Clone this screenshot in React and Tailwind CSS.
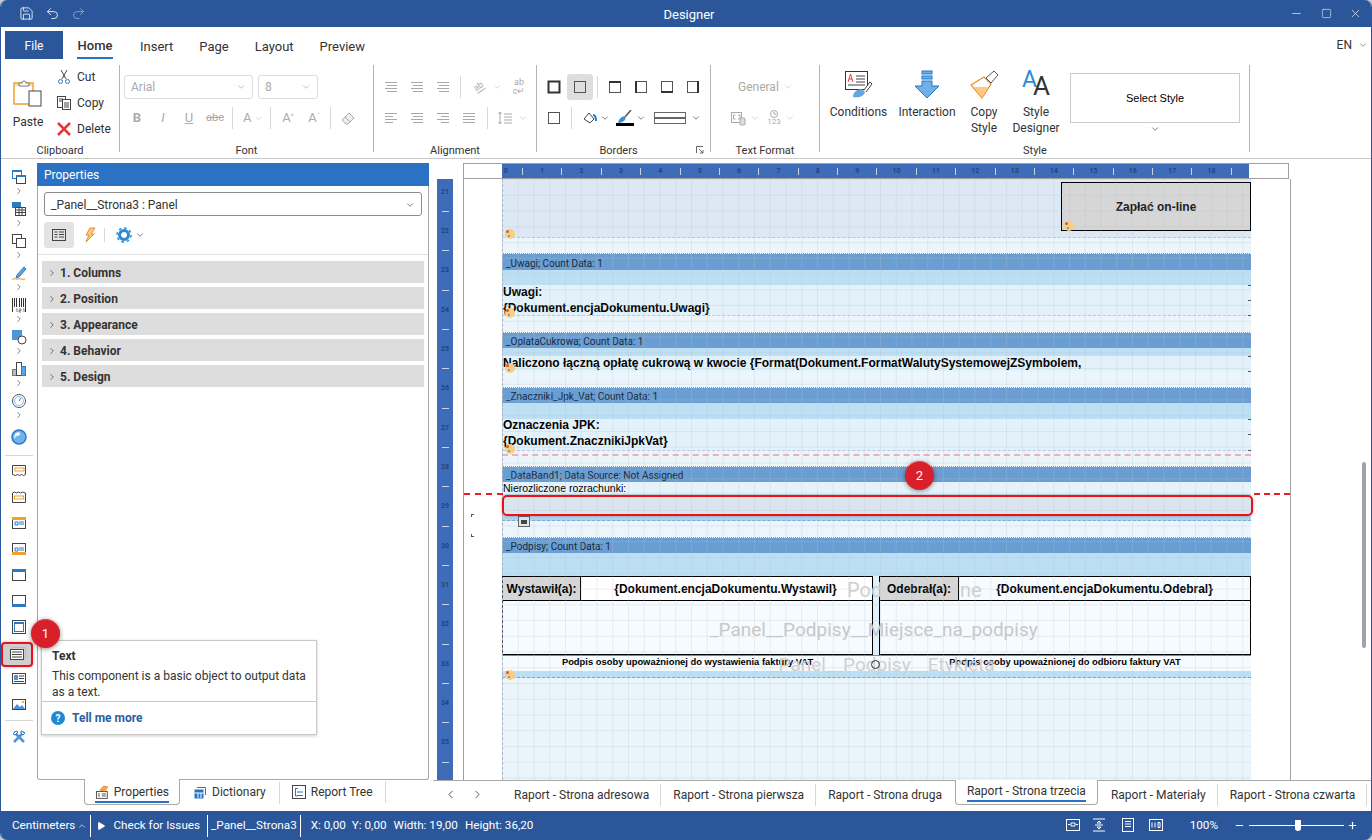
import React from 'react';
import { Undo2, Redo2, Save, Minus, Square, X, ChevronDown, ChevronRight, ChevronLeft, ChevronUp, Play, Plus } from 'lucide-react';

// shared bits
const Svg = ({ s = 16, h, children, className }) => (
  <svg width={s} height={h || s} viewBox={`0 0 ${s} ${h || s}`} fill="none" className={className}>{children}</svg>
);

const Chev = ({ className = 'text-[#555]', size = 10 }) => <ChevronDown size={size} strokeWidth={1.5} className={className} />;

const Cell = ({ active, children }) => (
  <div className={`w-[26px] h-[26px] shrink-0 flex items-center justify-center rounded-[3px] ${active ? 'bg-[#dedede]' : ''}`}>{children}</div>
);

const VSep = () => <div className="w-px h-[22px] bg-[#d8d8d8] shrink-0" />;

const Lines = ({ mode = 'center', dis = true }) => {
  const c = dis ? '#a8a8a8' : '#555';
  const rows = { center: [[1, 12], [3, 10], [1, 12], [3, 10]], left: [[1, 12], [1, 8], [1, 12], [1, 8]], right: [[1, 12], [5, 8], [1, 12], [5, 8]], full: [[1, 12], [1, 12], [1, 12], [1, 12]] }[mode];
  return (
    <Svg s={14}>
      {rows.map(([x, w], i) => <rect key={i} x={x} y={2 + i * 3} width={w} height="1" fill={c} />)}
    </Svg>
  );
};

const BoxIcon = ({ bold, side }) => (
  <Svg s={14}>
    <rect x="1.5" y="1.5" width="11" height="11" stroke={bold ? '#333' : '#555'} strokeWidth={bold ? 2 : 1} />
    {side === 't' && <rect x="1" y="1" width="12" height="2" fill="#333" />}
    {side === 'l' && <rect x="1" y="1" width="2" height="12" fill="#333" />}
    {side === 'b' && <rect x="1" y="11" width="12" height="2" fill="#333" />}
    {side === 'r' && <rect x="11" y="1" width="2" height="12" fill="#333" />}
  </Svg>
);

const GroupLabel = ({ children, extra, className = '' }) => (
  <div className={`absolute bottom-0 left-0 right-0 h-[15px] flex items-center justify-center text-[11px] leading-none text-[#333] ${className}`}>
    {children}
    {extra}
  </div>
);

const BigLabel = ({ children }) => <div className="text-[12px] leading-[16px] text-[#333] text-center">{children}</div>;

// ribbon
const ClipboardGroup = () => (
  <div className="relative w-[114px] h-[99px] pl-[8px] flex shrink-0">
    <div className="w-[30px] pt-[20px] flex flex-col items-center">
      <Svg s={30} h={30}>
        <rect x="1" y="4" width="19" height="21" fill="#fff" stroke="#f0a030" strokeWidth="1.5" />
        <rect x="2" y="5" width="17" height="2" fill="#fbd9a0" />
        <path d="M6 6 V4 h3 a2 2 0 0 1 4 0 h3 v3 H6z" fill="#fff" stroke="#777" />
        <rect x="16" y="12" width="12" height="15" fill="#fff" stroke="#444" />
      </Svg>
      <div className="mt-[7px] text-[12px] leading-none text-[#333]">Paste</div>
    </div>
    <div className="ml-[13px] pt-[5px] flex flex-col text-[12px] text-[#333]">
      {[
        ['Cut', <Svg key="c"><path d="M5 1l5 9M11 1L6 10" stroke="#444" /><circle cx="4.500" cy="12.500" r="2" stroke="#2b7bc4" /><circle cx="11.500" cy="12.500" r="2" stroke="#2b7bc4" /></Svg>],
        ['Copy', <Svg key="d"><rect x="1.5" y="1.5" width="8" height="11" stroke="#444" fill="#fff" /><rect x="6.5" y="4.5" width="8" height="10" stroke="#444" fill="#fff" /><path d="M8 8h5M8 10h5M8 12h5M3 4h4M3 6h3" stroke="#444" /></Svg>],
        ['Delete', <Svg key="x"><path d="M2 2l12 12M14 2L2 14" stroke="#e8383d" strokeWidth="2.6" /></Svg>],
      ].map(([t, icon]) => (
        <div key={t} className="h-[26px] flex items-center gap-[5px]">
          <div className="w-[16px] flex justify-center">{icon}</div>
          {t}
        </div>
      ))}
    </div>
    <GroupLabel><span className="mr-[4px]">Clipboard</span></GroupLabel>
  </div>
);

const FontGroup = () => (
  <div className="relative w-[253px] h-[99px] pl-[4px] pt-[16px] shrink-0 text-[#aaa]">
    <div className="flex gap-[5px]">
      <div className="w-[129px] h-[24px] border border-[#dcdcdc] rounded-[3px] flex items-center justify-between px-[6px] text-[12px]">Arial<Chev className="text-[#999]" /></div>
      <div className="w-[60px] h-[24px] border border-[#dcdcdc] rounded-[3px] flex items-center justify-between px-[6px] text-[12px]">8<Chev className="text-[#999]" /></div>
    </div>
    <div className="flex items-center mt-[6px] h-[26px]">
      <Cell><span className="text-[13px] font-bold">B</span></Cell>
      <Cell><span className="text-[13px] italic">I</span></Cell>
      <Cell><span className="text-[13px] underline">U</span></Cell>
      <Cell><span className="text-[11px] line-through">abc</span></Cell>
      <div className="ml-[4px]"><VSep /></div>
      <div className="w-[34px] pl-[10px] flex items-center gap-[3px] shrink-0 text-[13px]">A<Chev className="text-[#bbb]" size={9} /></div>
      <div className="ml-[3px]"><VSep /></div>
      <div className="ml-[4px]"><Cell><span className="text-[13px]">A<sup className="text-[7px]">^</sup></span></Cell></div>
      <Cell><span className="text-[13px]">A<sup className="text-[7px]">ˇ</sup></span></Cell>
      <div className="ml-[3px]"><VSep /></div>
      <div className="ml-[4px]"><Cell><Svg><path d="M2 10l7-7 5 5-6 6H6z" stroke="#aaa" fill="#eee" /><path d="M5 7l5 5" stroke="#aaa" /></Svg></Cell></div>
    </div>
    <GroupLabel>Font</GroupLabel>
  </div>
);

const AlignGroup = () => (
  <div className="relative w-[162px] h-[99px] pl-[4px] pt-[15px] shrink-0">
    <div className="flex items-center h-[26px]">
      <Cell><Lines /></Cell><Cell><Lines /></Cell><Cell><Lines /></Cell>
      <div className="ml-[4px] mr-[5px]"><VSep /></div>
      <Cell><span className="text-[9px] text-[#aaa] -rotate-[35deg] border-b border-[#aaa] leading-none">ab</span></Cell>
      <div className="w-[10px]"><Chev className="text-[#bbb]" /></div>
      <div className="ml-[4px]"><Cell><span className="text-[9px] leading-[9px] text-[#aaa] text-center">ab<br />c↵</span></Cell></div>
    </div>
    <div className="flex items-center h-[26px] mt-[5px]">
      <Cell><Lines mode="left" /></Cell><Cell><Lines /></Cell><Cell><Lines mode="right" /></Cell><Cell><Lines mode="full" /></Cell>
      <div className="ml-[5px] mr-[4px]"><VSep /></div>
      <Cell><Svg><path d="M3 2v12M1.5 4L3 2l1.500 2M1.500 12L3 14l1.500-2M7 4h8M7 7h8M7 10h8M7 13h8" stroke="#aaa" /></Svg></Cell>
      <div className="w-[10px]"><Chev className="text-[#bbb]" /></div>
    </div>
    <GroupLabel>Alignment</GroupLabel>
  </div>
);

const BordersGroup = () => (
  <div className="relative w-[173px] h-[99px] pl-[4px] pt-[15px] shrink-0">
    <div className="flex items-center h-[26px]">
      <Cell><BoxIcon bold /></Cell>
      <Cell active><BoxIcon /></Cell>
      <div className="ml-[4px] mr-[4px]"><VSep /></div>
      <Cell><BoxIcon side="t" /></Cell><Cell><BoxIcon side="l" /></Cell><Cell><BoxIcon side="b" /></Cell><Cell><BoxIcon side="r" /></Cell>
    </div>
    <div className="flex items-center h-[26px] mt-[5px]">
      <Cell><BoxIcon /></Cell>
      <div className="ml-[4px] mr-[8px]"><VSep /></div>
      <div className="w-[20px] flex justify-center">
        <Svg><path d="M2 9l5-6 5 6-4 4z" stroke="#444" fill="#fff" /><path d="M11 5c2 0 3 2 3 6" stroke="#1f78c8" strokeWidth="2" /></Svg>
      </div>
      <div className="w-[10px] mr-[5px]"><Chev className="text-[#333]" /></div>
      <div className="w-[20px] flex flex-col items-center">
        <Svg s={18} h={13}><path d="M15 0L9 7" stroke="#555" strokeWidth="1.500" /><path d="M2 13c1-4 3-7 8-7l-1 4c-2 2-4 3-7 3z" fill="#3f8fd6" /></Svg>
        <div className="w-[18px] h-[3px] bg-black" />
      </div>
      <div className="w-[10px] ml-[1px] mr-[8px]"><Chev className="text-[#333]" /></div>
      <div className="w-[32px] h-[12px] border border-[#666] flex flex-col justify-center shrink-0"><div className="h-[2px] bg-[#666]" /></div>
      <div className="w-[10px] ml-[5px]"><Chev className="text-[#333]" /></div>
    </div>
    <GroupLabel className="pr-[10px]" extra={
      <div className="absolute right-[6px] top-[3px]">
        <Svg s={8}><path d="M0.500 7V0.500H7M3 3l4 4M7 4v3H4" stroke="#666" /></Svg>
      </div>
    }>Borders</GroupLabel>
  </div>
);

const TextFormatGroup = () => (
  <div className="relative w-[108px] h-[99px] pt-[15px] shrink-0 text-[#aaa]">
    <div className="h-[26px] flex items-center gap-[4px] pl-[27px] text-[12px]">General<Chev className="text-[#bbb]" /></div>
    <div className="h-[26px] mt-[5px] flex items-center pl-[19px]">
      <Svg><rect x="1.500" y="2.500" width="10" height="10" stroke="#aaa" /><path d="M3.500 5h2M3.500 9h2M3.500 5v4M8 5h2v4H8" stroke="#aaa" /><rect x="10" y="8" width="5" height="7" rx="1" fill="#ddd" stroke="#aaa" /></Svg>
      <div className="ml-[4px]"><Chev className="text-[#bbb]" /></div>
      <div className="w-[16px] ml-[6px] mr-[3px] flex flex-col items-center text-[8px] leading-[8px]">
        <Svg s={8}><circle cx="4" cy="4" r="3.500" stroke="#aaa" /><path d="M4 2v2h2" stroke="#aaa" /></Svg>
        123
      </div>
      <Chev className="text-[#bbb]" />
    </div>
    <GroupLabel>Text Format</GroupLabel>
  </div>
);

const StyleGroup = () => (
  <div className="relative w-[429px] h-[99px] shrink-0 flex pl-[10px] pt-[11px]">
    <div className="w-[57px] flex flex-col items-center">
      <Svg s={30} h={30}>
        <rect x="1.500" y="1.500" width="22" height="18" fill="#fff" stroke="#333" />
        <path d="M4 12l2.500-8 2.500 8M5 9h3" stroke="#e8383d" />
        <path d="M12 6h9M12 9h9M12 12h9M4 15h17" stroke="#444" />
        <path d="M9 27c0-5 4-8 9-8l3 3c-1 4-5 6-12 5z" fill="#62a8e0" />
        <path d="M20 20l6-8 2 2-6 8" fill="#fff" stroke="#444" />
      </Svg>
      <div className="mt-[4px]"><BigLabel>Conditions</BigLabel></div>
    </div>
    <div className="w-[56px] ml-[12px] flex flex-col items-center">
      <Svg s={30} h={30}>
        <rect x="10" y="1" width="10" height="3" fill="#6fb0e8" stroke="#1f78c8" />
        <rect x="10" y="6" width="10" height="3" fill="#6fb0e8" stroke="#1f78c8" />
        <path d="M10 11h10v5h7L15 28 3 16h7z" fill="#6fb0e8" stroke="#1f78c8" />
      </Svg>
      <div className="mt-[4px]"><BigLabel>Interaction</BigLabel></div>
    </div>
    <div className="w-[40px] ml-[9px] flex flex-col items-center">
      <Svg s={30} h={30}>
        <path d="M2 15l13-8 7 7-9 14z" fill="#fff" stroke="#ee8c1f" strokeWidth="1.200" />
        <path d="M5 17h14l-6 11z" fill="#fbc97f" />
        <path d="M17 8l8-7 4 4-7 8z" fill="#fff" stroke="#555" />
      </Svg>
      <div className="mt-[4px]"><BigLabel>Copy<br />Style</BigLabel></div>
    </div>
    <div className="w-[54px] ml-[5px] flex flex-col items-center">
      <div className="relative h-[30px] w-[30px]">
        <span className="absolute left-[1px] -top-[3px] text-[23px] leading-[26px] text-[#2a8ad4]">A</span>
        <span className="absolute left-[12px] top-[1px] text-[26px] leading-[30px] text-[#333]">A</span>
      </div>
      <div className="mt-[4px]"><BigLabel>Style<br />Designer</BigLabel></div>
    </div>
    <div className="ml-[7px] -mt-[2px] flex flex-col items-center">
      <div className="w-[170px] h-[50px] mt-[5px] border border-[#ccc] flex items-center justify-center text-[11px] text-black [font-family:'Liberation_Sans',sans-serif]">Select Style</div>
      <div className="mt-[1px]"><Chev className="text-[#333]" /></div>
    </div>
    <div className="absolute bottom-0 left-[203px] h-[15px] flex items-center text-[11px] leading-none text-[#333]">Style</div>
  </div>
);

const GroupSep = () => <div className="w-px h-[87px] mt-[6px] bg-[#b4b4b4] shrink-0" />;

// left icon rail
const RailPair = ({ children }) => (
  <div className="h-[32px] flex flex-col items-center">
    {children}
    <ChevronRight size={10} strokeWidth={1.6} className="text-[#444] mt-[1px]" />
  </div>
);

const Band = ({ a = '#f59e2c', pos }) => (
  <Svg>
    <rect x="1.500" y="2.500" width="13" height="11" fill="#fff" stroke="#444" />
    {pos === 't' && <rect x="1" y="2" width="14" height="3" fill={a} />}
    {pos === 'b' && <rect x="1" y="11" width="14" height="3" fill={a} />}
    {pos === 'm' && <rect x="4" y="6" width="8" height="3" fill="#fff" stroke={a} />}
    {(pos === 't' || pos === 'b') && a === '#f59e2c' && <path d="M4 7h3v3H4zM8 7h5M8 9h5" stroke="#2b7bc4" />}
  </Svg>
);

const Rail = () => (
  <div className="w-[36px] shrink-0 flex flex-col items-center pt-[10px]">
    <RailPair><Svg><rect x="1.500" y="1.500" width="9" height="8" fill="#fff" stroke="#2b7bc4" /><rect x="1" y="1" width="10" height="2" fill="#2b7bc4" /><rect x="5.500" y="6.500" width="9" height="8" fill="#fff" stroke="#444" /><rect x="5" y="6" width="10" height="2" fill="#2b7bc4" /></Svg></RailPair>
    <RailPair><Svg><rect x="1" y="1" width="9" height="6" fill="#2b7bc4" /><rect x="4.500" y="6.500" width="10" height="8" fill="#fff" stroke="#444" /><path d="M4 9h11M4 11.500h11M8 6v9M11 6v9" stroke="#444" /></Svg></RailPair>
    <RailPair><Svg><rect x="1.500" y="1.500" width="9" height="9" stroke="#444" /><rect x="5.500" y="5.500" width="9" height="9" fill="#fff" stroke="#444" /></Svg></RailPair>
    <RailPair><Svg><path d="M6 10l7-8 2 2-7 8-3 1z" fill="#5aa5e2" stroke="#2b7bc4" /><path d="M1 15c2-3 4 0 6-1s4 1 7 0" stroke="#ef8a17" /></Svg></RailPair>
    <RailPair><Svg><path d="M1.500 1v14M14.500 1v14M3.500 1v9M5.500 1v9M8.500 1v9M10.500 1v9M12.500 1v9" stroke="#333" /><path d="M5 12h1v3M8 12h2v1.500H8V15h2M12 12h1v3" stroke="#666" strokeWidth=".8" /></Svg></RailPair>
    <RailPair><Svg><rect x="1" y="1" width="10" height="10" fill="#4d94dc" /><circle cx="11" cy="11" r="4" fill="#fff" stroke="#444" /></Svg></RailPair>
    <RailPair><Svg><rect x="1.500" y="8.500" width="4" height="6" fill="#bbb" stroke="#777" /><rect x="5.500" y="1.500" width="5" height="13" fill="#fff" stroke="#444" /><rect x="10.500" y="5.500" width="4" height="9" fill="#5aa5e2" stroke="#2b7bc4" /></Svg></RailPair>
    <RailPair><Svg><circle cx="8" cy="8" r="6.500" stroke="#555" /><circle cx="8" cy="8" r="4.500" stroke="#8cc0ea" /><path d="M8 8l2-3" stroke="#2b7bc4" /></Svg></RailPair>
    <div className="h-[24px] flex items-center">
      <Svg><circle cx="8" cy="8" r="7" fill="#6fb3ea" stroke="#2b7bc4" strokeWidth="1.500" /><path d="M4 5c2-2 4-2 5-1s-1 3-3 3-1 3-3 2" fill="#f4f9fd" /></Svg>
    </div>
    <div className="w-[28px] h-px bg-[#d8d8d8] mt-[6px] mb-[2px]" />
    <div className="flex flex-col items-center">
      {[
        <Svg key="1"><path d="M1.500 2.500h13v9l-2 1-2-1-2 1-2-1-2 1-3-1z" fill="#fff" stroke="#444" /><rect x="4" y="5" width="9" height="3" fill="#fff" stroke="#f59e2c" /></Svg>,
        <Svg key="2"><path d="M1.500 4l2-1 2 1 2-1 2 1 2-1 3 1v9.500h-13z" fill="#fff" stroke="#444" /><rect x="3.500" y="7" width="9" height="3" fill="#fff" stroke="#f59e2c" /></Svg>,
        <Band key="3" pos="t" />, <Band key="4" pos="b" />,
        <Band key="5" pos="t" a="#2b7bc4" />, <Band key="6" pos="b" a="#2b7bc4" />,
      ].map((ic, i) => <div key={i} className="h-[26px] flex items-center">{ic}</div>)}
      <div className="h-[26px] flex items-center">
        <Svg><rect x="1.500" y="1.500" width="13" height="13" stroke="#444" /><rect x="3.500" y="3.500" width="9" height="9" fill="#fff" stroke="#2b7bc4" /><rect x="3" y="3" width="10" height="2" fill="#2b7bc4" /></Svg>
      </div>
      <div className="h-[26px] flex items-center"><Svg><rect x="1.500" y="2.500" width="13" height="10" fill="#fff" stroke="#444" /><path d="M3 5h10M3 7.500h10M3 10h10" stroke="#444" /></Svg></div>
      <div className="h-[26px] flex items-center"><Svg><rect x="1.500" y="2.500" width="13" height="10" fill="#fff" stroke="#444" /><rect x="3" y="4" width="4" height="5" fill="#4d94dc" /><path d="M8 5h5M8 7.500h5M3 10.500h10" stroke="#444" /></Svg></div>
      <div className="h-[26px] flex items-center"><Svg><rect x="1.500" y="2.500" width="13" height="10" fill="#fff" stroke="#444" /><path d="M2 12l4-5 3 3 2-2 3 4z" fill="#4d94dc" /><circle cx="12" cy="5" r="1" fill="#ef8a17" /></Svg></div>
    </div>
    <div className="w-[28px] h-px bg-[#d8d8d8] mt-[2px] mb-[8px]" />
    <Svg><path d="M3 3l10 10M13 3L3 13" stroke="#4d94dc" strokeWidth="2.500" /><path d="M2 5l3-3 2 1-3 3zM10 2l4 2-2 2-2-2z" fill="#fff" stroke="#2b7bc4" /></Svg>
  </div>
);

// properties panel
const PropertiesPanel = () => (
  <div className="w-[392px] shrink-0 flex flex-col pt-[4px]">
    <div className="h-[23px] bg-[#2b72c4] text-white text-[12px] flex items-center pl-[7px] pt-px">Properties</div>
    <div className="flex-1 border-x border-b border-[#a8a8a8] rounded-b-[3px] px-[6px] pt-[6px]">
      <div className="h-[24px] border border-[#8c8c8c] rounded-[3px] flex items-center justify-between px-[6px] pt-px text-[12px] text-[#333]">
        _Panel__Strona3 : Panel
        <Chev className="text-[#333]" />
      </div>
      <div className="flex items-center h-[26px] mt-[6px]">
        <div className="w-[30px] h-[26px] bg-[#e3e3e3] rounded-[3px] flex items-center justify-center">
          <Svg s={14}><rect x="0.500" y="1.500" width="13" height="11" stroke="#444" /><path d="M2.500 4h3M2.500 6.500h3M2.500 9h3M7 4h5M7 6.500h5M7 9h5" stroke="#444" /></Svg>
        </div>
        <div className="w-[30px] flex justify-center">
          <Svg><path d="M9 1h5L10 7h3l-8 8 3-7H5z" fill="#fbc97f" stroke="#ee8c1f" /></Svg>
        </div>
        <div className="w-px h-[14px] bg-[#d8d8d8] mr-[11px]" />
        <Svg><circle cx="8" cy="8" r="4.500" stroke="#2b8ad4" strokeWidth="3" /><circle cx="8" cy="8" r="7" stroke="#2b8ad4" strokeWidth="1.500" strokeDasharray="2.500 3" /></Svg>
        <div className="ml-[3px]"><Chev className="text-[#333]" /></div>
      </div>
      <div className="-mx-[6px] mt-[6px] h-px bg-[#e2e2e2]" />
      <div className="mt-[6px] -mx-[2px] flex flex-col gap-[4px]">
        {['1. Columns', '2. Position', '3. Appearance', '4. Behavior', '5. Design'].map(t => (
          <div key={t} className="h-[22px] bg-[#dddddd] flex items-center pl-[5px] pt-px text-[12px] font-bold text-[#333]">
            <ChevronRight size={10} strokeWidth={1.6} className="text-[#333] mr-[3px]" />
            {t}
          </div>
        ))}
      </div>
    </div>
    <div className="h-[31px] flex items-start pl-[47px] text-[12px] text-[#333]">
      <div className="w-[96px] h-[26px] -mt-px bg-white border-x border-b border-[#a8a8a8] rounded-b-[4px] flex flex-col items-center pt-[4px]">
        <div className="flex items-center gap-[5px] h-[17px] w-[74px]">
          <Svg s={14}><rect x="1.500" y="6.500" width="11" height="7" fill="#fff" stroke="#555" /><path d="M3 9h2M3 11h2M7 9h4M7 11h4" stroke="#555" /><path d="M5 5l4-4 4 1-3 4z" fill="#f5a856" stroke="#ee8c1f" /></Svg>
          Properties
        </div>
        <div className="w-[74px] h-[2px] bg-[#2b72c4] mt-px" />
      </div>
      <div className="flex items-center h-[22px] mt-[1px]">
        <div className="ml-[13px]"><Svg s={14}><rect x="1.500" y="4.500" width="9" height="9" fill="#2b72c4" /><path d="M1.500 8h9M5 8v5M8 8v5" stroke="#fff" /><path d="M4 2.500h8.500V10" stroke="#2b72c4" /></Svg></div>
        <div className="ml-[5px]">Dictionary</div>
        <div className="ml-[13px] h-[20px]"><VSep /></div>
        <div className="ml-[12px]"><Svg s={14}><rect x="0.500" y="0.500" width="13" height="13" stroke="#444" /><path d="M3 3.500h3M5 7h6M5 10.500h6M3.500 3v8h2" stroke="#2b72c4" /></Svg></div>
        <div className="ml-[5px]">Report Tree</div>
        <div className="ml-[12px]"><VSep /></div>
      </div>
    </div>
  </div>
);

// rulers
const hCells = Array.from({ length: 38 }, (_, i) => (i % 2 === 0 ? String(i / 2) : '|'));
const vCells = Array.from({ length: 30 }, (_, i) => (i % 2 === 0 ? String(21 + i / 2) : '—'));

const HRuler = () => (
  <div className="w-[826px] h-[16px] border border-[#a0a0a0] bg-white ml-0 pl-[38px] shrink-0">
    <div className="w-[747px] h-full bg-[#3f6cb9] overflow-hidden">
      <div className="flex -ml-[9px] w-[760px] text-[7px] text-[#24437a] font-bold">
        {hCells.map((c, i) => (
          <div key={i} className={`w-[19.7px] shrink-0 h-[14px] flex items-center ${i === 0 ? 'justify-end pr-[5px]' : 'justify-center'}`}>
            {c === '|' ? <div className="w-px h-[7px] bg-[#c8d4e8]" /> : c}
          </div>
        ))}
      </div>
    </div>
  </div>
);

const VRuler = () => (
  <div className="w-[16px] h-[601px] mt-[20px] bg-[#3f6cb9] overflow-hidden shrink-0 pt-[3px] text-[7px] text-[#24437a] font-bold">
    {vCells.map((c, i) => <div key={i} className="h-[19.68px] flex items-center justify-center">{c === '—' ? <div className="w-[7px] h-px bg-[#c8d4e8]" /> : c}</div>)}
  </div>
);

// report page
const arial = "[font-family:'Liberation_Sans',sans-serif]";

const Head = ({ h = 'h-[16px]', children }) => (
  <div className={`${h} bg-[#6a9ed2] border-t border-dotted border-white flex items-center pl-[4px] pt-[2px] text-[10px] text-[#18293d] [font-family:Roboto,sans-serif] whitespace-nowrap`}>{children}</div>
);

const Pal = ({ className }) => (
  <div className={`absolute w-[10px] h-[10px] rounded-full bg-[#f6cf85] ${className}`}>
    <div className="absolute left-[1px] top-[1px] w-[3px] h-[3px] rounded-full bg-[#e8532a]" />
    <div className="absolute left-[3px] top-[6px] w-[2px] h-[2px] rounded-full bg-[#5b8fb0]" />
  </div>
);

const Marks = ({ className }) => (
  <div className={`absolute w-[3px] border-t border-[#555] ${className}`} />
);

const ReportPage = () => (
  <div className="relative w-[749px] h-[601px] ml-[38px] overflow-hidden shrink-0">
    <div className={`flex flex-col h-full text-black ${arial}`}>
      <div className="h-[59px] bg-[#dce9f4] border-b border-dashed border-[#b5c8e2] flex justify-end pt-[3px] shrink-0">
        <div className="w-[190px] h-[49px] bg-[#d6d6d6] border border-black flex items-center justify-center text-[12px] font-bold text-[#1c1c1c]">Zapłać on-line</div>
      </div>
      <div className="h-[15px] bg-[#ebf5fb] shrink-0" />
      <Head h="h-[17px]">_Uwagi; Count Data: 1</Head>
      <div className="h-[15px] bg-[#bcdff3] shrink-0" />
      <div className="h-[31px] bg-[#e3f2fa] border-b border-dashed border-[#b5c8e2] text-[12px] font-bold leading-[16px] shrink-0">
        <div className="-mt-px pl-[1px]">Uwagi:<br />{'{Dokument.encjaDokumentu.Uwagi}'}</div>
      </div>
      <div className="h-[16px] bg-[#ebf5fb] shrink-0" />
      <Head>_OplataCukrowa; Count Data: 1</Head>
      <div className="h-[8px] bg-[#bcdff3] shrink-0" />
      <div className="h-[15px] bg-[#e3f2fa] pl-[1px] text-[12px] font-bold leading-[15px] whitespace-nowrap shrink-0">{'Naliczono łączną opłatę cukrową w kwocie {Format(Dokument.FormatWalutySystemowejZSymbolem,'}</div>
      <div className="h-[16px] bg-[#ebf5fb] shrink-0" />
      <Head>_Znaczniki_Jpk_Vat; Count Data: 1</Head>
      <div className="h-[16px] bg-[#bcdff3] shrink-0" />
      <div className="h-[32px] bg-[#e3f2fa] border-b border-dashed border-[#b5c8e2] text-[12px] font-bold leading-[16px] shrink-0">
        <div className="-mt-[2px] pl-[1px]">Oznaczenia JPK:<br />{'{Dokument.ZnacznikiJpkVat}'}</div>
      </div>
      <div className="h-[15px] bg-[#ebf5fb] shrink-0 pt-[3px]"><div className="border-t-2 border-dashed border-[#eeb0b8]" /></div>
      <Head>_DataBand1; Data Source: Not Assigned</Head>
      <div className="h-[13px] bg-[#e6f3fa] pl-[1px] text-[10.5px] leading-[12px] shrink-0">Nierozliczone rozrachunki:</div>
      <div className="h-[20px] bg-[#dae5ed] shrink-0" />
      <div className="h-[6px] bg-[#b2d3e8] border-b border-dashed border-[#7ea8d8] shrink-0" />
      <div className="h-[16px] bg-[#ebf5fb] shrink-0" />
      <Head>_Podpisy; Count Data: 1</Head>
      <div className="h-[23px] bg-[#bcdff3] shrink-0" />
      <div className="flex h-[79px] shrink-0 bg-[#e3f2fa]">
        <div className="w-[371px] border border-black bg-[#f6fbff] flex flex-col">
          <div className="h-[24px] flex border-b border-black text-[12px] font-bold">
            <div className="w-[78px] bg-[#d6d6d6] border-r border-black flex items-center justify-center">Wystawił(a):</div>
            <div className="flex-1 flex items-center justify-center bg-white pr-[2px]">{'{Dokument.encjaDokumentu.Wystawil}'}</div>
          </div>
        </div>
        <div className="w-[372px] ml-[6px] border border-black bg-[#f6fbff] flex flex-col">
          <div className="h-[24px] flex border-b border-black text-[12px] font-bold">
            <div className="w-[79px] bg-[#d6d6d6] border-r border-black flex items-center justify-center">Odebrał(a):</div>
            <div className="flex-1 flex items-center justify-center bg-[#f6fbff]">{'{Dokument.encjaDokumentu.Odebral}'}</div>
          </div>
        </div>
      </div>
      <div className="flex h-[16px] shrink-0 bg-[#f6fbff] border-t border-[#888] text-[9.4px] font-bold leading-[11px] whitespace-nowrap">
        <div className="w-[371px] text-center">Podpis osoby upoważnionej do wystawienia faktury VAT</div>
        <div className="w-[378px] pl-[6px] text-center">Podpis osoby upoważnionej do odbioru faktury VAT</div>
      </div>
      <div className="h-[7px] bg-[#bcdff3] border-b border-dashed border-[#6fa5dc] shrink-0" />
      <div className="flex-1 bg-[#e9f4fb]" />
    </div>

    {/* grid sits over the bands */}
    <div className="absolute inset-0 pointer-events-none bg-[linear-gradient(to_right,rgba(180,192,205,.26)_1px,transparent_1px),linear-gradient(to_bottom,rgba(180,192,205,.26)_1px,transparent_1px)] bg-[size:15.75px_15.75px]" />
    <div className="absolute left-0 top-0 bottom-0 border-l border-dashed border-[#a8b4c4]" />

    {/* object names drawn across the page */}
    <div className="absolute left-[345px] top-[399px] text-[20px] leading-[24px] text-[#cfcfcf] whitespace-nowrap pointer-events-none">Pod</div>
    <div className="absolute left-[458px] top-[399px] text-[20px] leading-[24px] text-[#cfcfcf] whitespace-nowrap pointer-events-none">ne</div>
    <div className="absolute left-[208px] top-[439px] text-[19px] leading-[24px] text-[#c8c8c8] whitespace-nowrap pointer-events-none">_Panel__Podpisy__Miejsce_na_podpisy</div>
    <div className="absolute left-[268px] top-[474px] text-[19px] leading-[24px] text-[#cfcfcf] whitespace-nowrap pointer-events-none">_Panel__Podpisy__Etykieta</div>

    <Pal className="left-[3px] top-[50px]" />
    <Pal className="left-[562px] top-[42px]" />
    <Pal className="left-[3px] top-[129px]" />
    <Pal className="left-[3px] top-[184px]" />
    <Pal className="left-[3px] top-[265px]" />
    <Pal className="left-[3px] top-[491px]" />
    <Marks className="right-0 top-[106px]" />
    <Marks className="right-0 top-[121px]" />
    <Marks className="right-0 top-[136px]" />
    <Marks className="right-0 top-[177px]" />
    <Marks className="right-0 top-[192px]" />
    <Marks className="right-0 top-[240px]" />
    <Marks className="right-0 top-[255px]" />
    <Marks className="right-0 top-[271px]" />
    <div className="absolute left-[369px] top-[481px] w-[9px] h-[9px] rounded-full border border-[#333]" />
    <div className="absolute left-[16px] top-[337px] w-[12px] h-[11px] border border-[#666] bg-[#dfe7ee] flex items-center justify-center"><div className="w-[6px] h-[4px] bg-[#444]" /></div>
  </div>
);

const ReportTabs = () => (
  <div className="h-[31px] ml-[4px] border-t border-[#a8a8a8] flex items-center pb-[3px] text-[12px] text-[#333] shrink-0">
    <ChevronLeft size={13} strokeWidth={1.5} className="ml-[11px] text-[#333]" />
    <ChevronRight size={13} strokeWidth={1.5} className="ml-[14px] text-[#333]" />
    <span className="ml-[30px]">Raport - Strona adresowa</span>
    <div className="ml-[11px]"><VSep /></div>
    <span className="ml-[12px]">Raport - Strona pierwsza</span>
    <div className="ml-[11px]"><VSep /></div>
    <span className="ml-[12px]">Raport - Strona druga</span>
    <div className="w-[143px] h-[25px] ml-[13px] self-start -mt-px bg-white border-x border-b border-[#a8a8a8] rounded-b-[4px] flex flex-col items-center pt-[3px]">
      <span className="leading-[17px]">Raport - Strona trzecia</span>
      <div className="w-[119px] h-[2px] bg-[#2b72c4]" />
    </div>
    <span className="ml-[13px]">Raport - Materiały</span>
    <div className="ml-[11px]"><VSep /></div>
    <span className="ml-[12px] whitespace-nowrap">Raport - Strona czwarta</span>
    <div className="ml-[11px]"><VSep /></div>
  </div>
);

const StatusBar = () => (
  <div className="h-[29px] bg-[#2b579a] text-white text-[11.7px] flex items-center shrink-0 pl-[11px] whitespace-nowrap">
    <span>Centimeters</span>
    <ChevronUp size={10} strokeWidth={1.6} className="ml-[2px]" />
    <div className="w-px h-[22px] bg-white ml-[3px]" />
    <Play size={10} fill="#fff" strokeWidth={0} className="ml-[5px]" />
    <span className="ml-[7px]">Check for Issues</span>
    <div className="w-px h-[22px] bg-white ml-[7px]" />
    <span className="ml-[3px]">_Panel__Strona3</span>
    <div className="w-px h-[22px] bg-white ml-[3px]" />
    <span className="ml-[10px]">X: 0,00</span>
    <span className="ml-[6px]">Y: 0,00</span>
    <span className="ml-[7px]">Width: 19,00</span>
    <span className="ml-[7px]">Height: 36,20</span>
    <div className="ml-auto flex items-center">
      <Svg s={14}><rect x="0.500" y="1.500" width="13" height="11" stroke="#fff" /><path d="M5 5h4v3H5zM2 6.500h2M10 6.500h2" stroke="#fff" /></Svg>
      <div className="ml-[12px]"><Svg s={14}><path d="M1 1h12M1 13h12M3 7h8M7 3l2 2H5zM7 11l2-2H5z" stroke="#fff" /></Svg></div>
      <div className="ml-[15px]"><Svg s={14}><rect x="1.500" y="0.500" width="11" height="13" stroke="#fff" /><path d="M4 3.500h6M4 6h6M4 8.500h6" stroke="#fff" /></Svg></div>
      <div className="ml-[14px]"><Svg s={14}><rect x="0.500" y="1.500" width="13" height="11" stroke="#fff" /><path d="M3 4.500v5M6 4.500v5M9 4.500h2v5H9z" stroke="#fff" /></Svg></div>
      <span className="ml-[27px]">100%</span>
      <Minus size={11} strokeWidth={2.6} className="ml-[16px]" />
      <div className="relative w-[95px] h-px bg-white ml-[4px]">
        <div className="absolute left-[46px] -top-[5px] w-[6px] h-[11px] bg-white rounded-b-[3px]" />
      </div>
      <Plus size={11} strokeWidth={2.6} className="ml-[3px] mr-[13px]" />
    </div>
  </div>
);

const Badge = ({ n, className }) => (
  <div className={`absolute w-[29px] h-[29px] rounded-full bg-[#d8202a] border-t border-[#f04048] shadow-[0_1px_5px_rgba(0,0,0,0.45)] text-white text-[13px] flex items-center justify-center ${className}`}>{n}</div>
);

export default function App() {
  return (
    <div className="w-[1372px] h-[840px] bg-[#c4c8d0]">
      <div className="relative w-full h-full rounded-[7px] overflow-hidden bg-white border-x border-[#2b579a] flex flex-col [font-family:Roboto,sans-serif]">
        <div className="h-[27px] bg-[#2b579a] text-white flex items-center shrink-0 pl-[18px] pr-[9px]">
          <Save size={15} strokeWidth={1.3} />
          <Undo2 size={15} strokeWidth={1.3} className="ml-[11px]" />
          <Redo2 size={15} strokeWidth={1.3} className="ml-[11px] opacity-50" />
          <div className="flex-1 text-center text-[13px] pt-[3px] pl-[2px]">Designer</div>
          <Minus size={13} strokeWidth={1.2} />
          <Square size={11} strokeWidth={1.2} className="ml-[18px]" />
          <X size={13} strokeWidth={1.2} className="ml-[17px]" />
        </div>

        <div className="h-[32px] flex items-end pl-[4px] text-[13px] text-[#333] shrink-0">
          <div className="w-[58px] h-[28px] bg-[#2b579a] text-white text-[12px] flex items-center justify-center pt-[2px]">File</div>
          <div className="ml-[14px] w-[36px] h-[28px] pt-[3px] border-b-2 border-[#2b72c4] flex items-center justify-center font-medium">Home</div>
          <div className="ml-[27px] h-[28px] pt-[3px] flex items-center">Insert</div>
          <div className="ml-[26px] h-[28px] pt-[3px] flex items-center">Page</div>
          <div className="ml-[26px] h-[28px] pt-[3px] flex items-center">Layout</div>
          <div className="ml-[26px] h-[28px] pt-[3px] flex items-center">Preview</div>
          <div className="ml-auto h-[28px] flex items-center gap-[6px] pr-[3px] text-[12px]">EN<Chev className="text-[#555]" /></div>
        </div>

        <div className="h-[100px] flex items-start pl-[4px] border-b border-[#c8c8c8] shrink-0">
          <ClipboardGroup />
          <GroupSep />
          <FontGroup />
          <GroupSep />
          <AlignGroup />
          <GroupSep />
          <BordersGroup />
          <GroupSep />
          <TextFormatGroup />
          <GroupSep />
          <StyleGroup />
          <GroupSep />
        </div>

        <div className="flex-1 flex min-h-0">
          <Rail />
          <PropertiesPanel />
          <div className="flex-1 flex flex-col min-w-0">
            <div className="flex-1 flex pl-[8px] min-h-0">
              <VRuler />
              <div className="ml-[10px] flex flex-col pt-[4px] w-[828px] shrink-0">
                <HRuler />
                <div className="h-[601px] w-[828px] border-x border-[#a0a0a0] shrink-0">
                  <ReportPage />
                </div>
              </div>
              <div className="flex-1 relative">
                <div className="absolute left-[71px] top-[303px] w-[4px] h-[186px] bg-[#a0a4a8] rounded-full" />
              </div>
            </div>
            <ReportTabs />
          </div>
        </div>

        <StatusBar />

        {/* callouts from the tutorial, laid over the app */}
        <div className="absolute left-[0px] top-[642px] w-[32px] h-[25px] rounded-[4px] border-2 border-[#e8121c] bg-[#c9c9c9]/90 shadow-[0_0_3px_rgba(0,0,0,0.3)] flex items-center justify-center">
          <Svg><rect x="1.500" y="2.500" width="13" height="10" fill="#fff" stroke="#444" /><path d="M3 5h10M3 7.500h10M3 10h10" stroke="#444" /></Svg>
        </div>
        <div className="absolute left-[40px] top-[640px] w-[276px] h-[95px] bg-white border border-[#c8c8c8] shadow-[0_1px_3px_rgba(0,0,0,0.2)] text-[12px] text-[#333]">
          <div className="pl-[10px] pt-[7px] h-[61px] border-b border-[#c8c8c8] leading-[16px]">
            <div className="font-bold">Text</div>
            <div className="mt-[4px]">This component is a basic object to output data<br />as a text.</div>
          </div>
          <div className="flex items-center h-[32px] pl-[9px] font-bold text-[#2b5f9e]">
            <div className="w-[14px] h-[14px] rounded-full bg-[#1f8ad4] text-white text-[10px] flex items-center justify-center mr-[7px]">?</div>
            Tell me more
          </div>
        </div>
        <Badge n="1" className="left-[30px] top-[619px]" />

        <div className="absolute left-[463px] top-[493px] w-[39px] border-t-2 border-dashed border-[#ea1c24]" />
        <div className="absolute left-[1253px] top-[493px] w-[36px] border-t-2 border-dashed border-[#ea1c24]" />
        <div className="absolute left-[501px] top-[495px] w-[751px] h-[21px] rounded-[5px] border-2 border-[#e8121c] shadow-[0_0_3px_rgba(0,0,0,0.3)]" />
        <Badge n="2" className="left-[904px] top-[461px]" />
        <div className="absolute left-[470px] top-[514px] w-[3px] h-[3px] border-l border-t border-[#555]" />
        <div className="absolute left-[470px] top-[534px] w-[3px] h-[3px] border-l border-b border-[#555]" />
      </div>
    </div>
  );
}
